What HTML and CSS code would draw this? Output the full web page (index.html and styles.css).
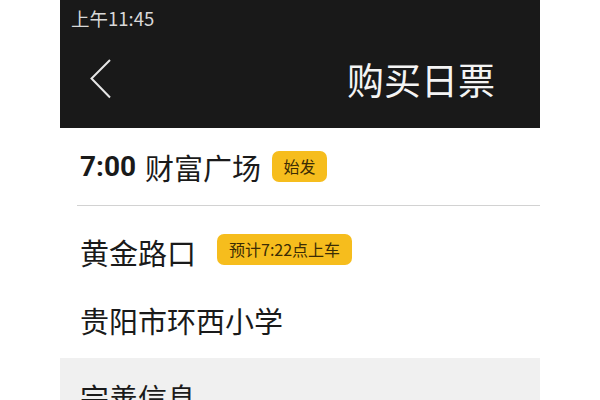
FILE: index.html
```html
<!DOCTYPE html>
<html lang="zh-CN">
<head>
    <meta charset="UTF-8">
    <meta name="viewport" content="width=device-width, initial-scale=1.0">
    <title>购买日票</title>
    <link rel="stylesheet" href="styles.css">
</head>
<body>

    <div class="phone">
        <header class="top">
            <div class="status">上午11:45</div>
            <div class="nav">
                <svg class="back" width="22" height="40" viewBox="0 0 22 40">
                    <path d="M20 1 L1.5 19.5 L20 38.5" fill="none" stroke="#e6e6e6" stroke-width="2"/>
                </svg>
                <h1 class="title">购买日票</h1>
            </div>
        </header>

        <div class="row row-first">
            <span class="time">7:00</span>
            <span class="stop">财富广场</span>
            <span class="badge badge-start">始发</span>
        </div>

        <div class="row row-board">
            <span class="stop">黄金路口</span>
            <span class="badge badge-eta">预计7:22点上车</span>
        </div>

        <div class="row row-end">
            <span class="stop">贵阳市环西小学</span>
        </div>

        <div class="section">
            <div class="section-title">完善信息</div>
        </div>
    </div>

</body>
</html>
```

FILE: styles.css
```css
body {
    font-family: 'Noto Sans CJK SC', 'Noto Sans', sans-serif;
    background-color: #fff;
    color: #1a1a1a;
    margin: 0;
    padding: 0;
}

.phone {
    width: 480px;
    margin: 0 auto;
    height: 400px;
    overflow: hidden;
}

.top {
    background-color: #191919;
    height: 128px;
    display: flex;
    flex-direction: column;
}

.status {
    color: #d8d8d8;
    font-size: 18.5px;
    line-height: 36px;
    padding-left: 11px;
}

.nav {
    flex-grow: 1;
    display: flex;
    align-items: center;
    justify-content: space-between;
    padding: 0 45px 6px 30px;
}

.back {
    display: block;
}

.title {
    margin: 0;
    color: #f4f4f4;
    font-size: 37px;
    font-weight: 400;
    line-height: 44px;
}

.row {
    display: flex;
    align-items: center;
    padding-left: 20px;
    font-size: 29px;
    line-height: 40px;
}

.row-first {
    margin-left: 17px;
    padding: 19px 0 18px 3px;
    border-bottom: 1px solid #d2d2d2;
}

.time {
    font-family: 'Roboto', 'Noto Sans', sans-serif;
    font-weight: 700;
    font-size: 28px;
    margin-right: 9px;
}

.row-board {
    padding-top: 26px;
}

.row-end {
    padding-top: 28px;
    padding-bottom: 18px;
}

.badge {
    background-color: #f6bd1d;
    color: #3b2c05;
    border-radius: 7px;
    height: 31px;
    line-height: 31px;
    font-size: 16px;
    padding: 0 11.5px;
    box-sizing: border-box;
}

.badge-start {
    margin-left: 11px;
    margin-top: -2px;
}

.badge-eta {
    margin-left: 21px;
    margin-top: -6px;
    padding: 0 12px;
}

.section {
    background-color: #f0f0f0;
    padding: 19px 0 0 20px;
    height: 60px;
}

.section-title {
    font-size: 29px;
    line-height: 40px;
}
```
